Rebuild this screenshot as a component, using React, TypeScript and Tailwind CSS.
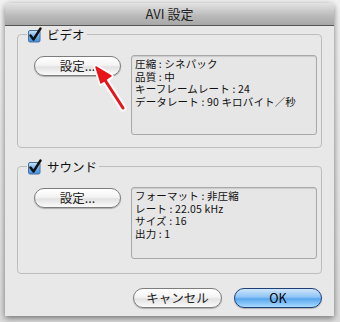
import React from "react";

const jp = { fontFamily: '"Lucida Grande", "Noto Sans CJK JP", "Noto Sans", sans-serif' };

function CheckBox() {
  return (
    <svg width="16" height="16" viewBox="0 0 16 16" className="block">
      <defs>
        <linearGradient id="cbg" x1="0" y1="0" x2="0" y2="1">
          <stop offset="0" stopColor="#cfe6fb" />
          <stop offset="0.5" stopColor="#6fb0ec" />
          <stop offset="1" stopColor="#3f8fe0" />
        </linearGradient>
      </defs>
      <rect x="1.5" y="3.5" width="11.5" height="11.5" rx="1.5" fill="url(#cbg)" stroke="#4a6f9a" />
      <path d="M3.5 8.5 L6.5 12.5 L13.5 1.5" fill="none" stroke="#111" strokeWidth="2.4" strokeLinecap="round" strokeLinejoin="round" />
    </svg>
  );
}

function AquaButton({ label, width, blue = false }: { label: string; width: string; blue?: boolean }) {
  return (
    <div
      className={`${width} h-[20px] rounded-full flex items-center justify-center text-[12.5px] border ${
        blue
          ? "border-[#1d3f7a] bg-[linear-gradient(#cfe6fb_0%,#8dc3f5_45%,#5aa6ee_55%,#a8dbff_100%)] text-black"
          : "border-[#7c7c7c] bg-[linear-gradient(#ffffff_0%,#f4f4f4_45%,#e2e2e2_55%,#fafafa_100%)] text-[#222]"
      } shadow-[0_1px_1px_rgba(0,0,0,0.25)]`}
      style={jp}
    >
      {label}
    </div>
  );
}

function InfoBox({ lines, height }: { lines: string[]; height: string }) {
  return (
    <div
      className={`w-[186px] ${height} rounded-[3px] border border-[#a9a9a9] bg-[#e6e6e6] shadow-[inset_0_1px_1px_rgba(0,0,0,0.12)] px-[3px] pt-[2px] text-[10.5px] tracking-[0.15px] leading-[12.5px] text-[#111]`}
      style={jp}
    >
      {lines.map((l) => (
        <div key={l}>{l}</div>
      ))}
    </div>
  );
}

function Group({ title, lines, groupH, infoH, arrow = false }: {
  title: string; lines: string[]; groupH: string; infoH: string; arrow?: boolean;
}) {
  return (
    <div className={`relative mx-[12px] ${groupH} rounded-[4px] border border-[#bdbdbd]`}>
      <div className="absolute -top-[9px] left-[9px] flex items-center gap-[4px] bg-[#e8e8e8] pr-[2px]">
        <CheckBox />
        <span className="text-[12.5px] text-[#111]" style={jp}>{title}</span>
      </div>
      <div className="flex pl-[16px] pt-[20px] pr-[5px]">
        <div className="mt-[1px]">
          <AquaButton label="設定..." width="w-[87px]" />
        </div>
        <div className="ml-[10px]">
          <InfoBox lines={lines} height={infoH} />
        </div>
      </div>
      {arrow && (
        <svg className="absolute left-[70px] top-[26px]" width="44" height="52" viewBox="0 0 44 52">
          <path d="M35 47 L15 16" stroke="#fff" strokeWidth="7" strokeLinecap="round" />
          <path d="M8 6 L23 15 L13 22 Z" fill="#fff" stroke="#fff" strokeWidth="5" strokeLinejoin="round" />
          <path d="M35 47 L15 16" stroke="#e8141a" strokeWidth="3" strokeLinecap="round" />
          <path d="M8 6 L23 15 L13 22 Z" fill="#e8141a" stroke="#e8141a" strokeWidth="1.5" strokeLinejoin="round" />
        </svg>
      )}
    </div>
  );
}

export default function App() {
  return (
    <div className="w-[340px] h-[322px] bg-[linear-gradient(#f2f2f2,#dcdcdc)] pl-[5px] pt-[3px] overflow-hidden">
      <div className="w-[329px] h-[313px] bg-[#e8e8e8] rounded-t-[5px] shadow-[0_2px_6px_rgba(0,0,0,0.5)] flex flex-col">
        <div className="h-[23px] rounded-t-[5px] border-b border-[#555] bg-[linear-gradient(#e3e3e3,#b9b9b9_60%,#a8a8a8)] flex items-center justify-center">
          <span className="text-[13px] text-[#222]" style={jp}>AVI 設定</span>
        </div>
        <div className="pt-[8px]">
          <Group
            title="ビデオ"
            groupH="h-[114px]"
            infoH="h-[80px]"
            arrow
            lines={["圧縮 : シネパック", "品質 : 中", "キーフレームレート : 24", "データレート : 90 キロバイト／秒"]}
          />
        </div>
        <div className="pt-[18px]">
          <Group
            title="サウンド"
            groupH="h-[108px]"
            infoH="h-[72px]"
            lines={["フォーマット : 非圧縮", "レート : 22.05 kHz", "サイズ : 16", "出力 : 1"]}
          />
        </div>
        <div className="flex justify-end gap-[12px] pr-[12px] pt-[14px]">
          <AquaButton label="キャンセル" width="w-[89px]" />
          <AquaButton label="OK" width="w-[88px]" blue />
        </div>
      </div>
    </div>
  );
}
